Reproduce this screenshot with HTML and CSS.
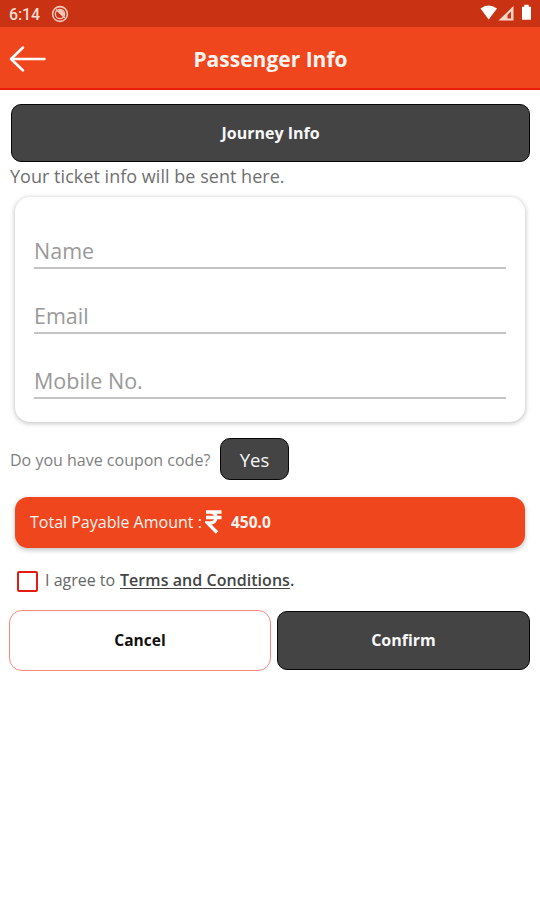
FILE: index.html
```
<!DOCTYPE html>
<html lang="en">
<head>
<meta charset="utf-8">
<title>Passenger Info</title>
<link rel="stylesheet" href="styles.css">
</head>
<body>
<div class="status">
  <span class="clock">6:14</span>
  <svg class="notice" width="18" height="18" viewBox="0 0 18 18"><circle cx="9" cy="9" r="7.4" fill="none" stroke="#f6c9bd" stroke-width="1.6"/><circle cx="9" cy="9" r="4.6" fill="none" stroke="#f6c9bd" stroke-width="1.3"/><path d="M5 4.500 14 13M7 6.200c3-1.700 5.600 0 5.500 3.500z" fill="#f6c9bd" stroke="#f6c9bd" stroke-width="1.300"/></svg>
  <svg class="signals" width="52" height="18" viewBox="0 0 52 18"><path d="M.5 4.500Q8.500-1.500 17 4.500L8.700 15.500z" fill="#fff"/><path d="M33.500 2V16.500H18.500z" fill="#f9d5ca"/><path d="M27.500 11 31 7.500V14.500H27.500z" fill="#c93212"/><path d="M42 2.800h2.300V.8h4.400v2H51V15.800h-9z" fill="#fff"/></svg>
</div>
<header class="bar">
  <svg class="back" width="38" height="28" viewBox="0 0 38 28"><path d="M14 2.500 2 14 14 25.500M2 14H35.500" fill="none" stroke="#fff" stroke-width="2.500" stroke-linecap="round" stroke-linejoin="round"/></svg>
  <h1>Passenger Info</h1>
</header>
<main>
  <button class="dark journey">Journey Info</button>
  <p class="hint">Your ticket info will be sent here.</p>
  <section class="card">
    <div class="field">Name</div>
    <div class="field">Email</div>
    <div class="field">Mobile No.</div>
  </section>
  <div class="coupon"><span class="question">Do you have coupon code?</span><button class="dark yes">Yes</button></div>
  <div class="total"><span class="label">Total Payable Amount :</span><svg width="17" height="24" viewBox="0 0 17 24"><path d="M1 2H16.500M1 7.500H16.500M1 2H5C13 2 13 13 5 13H2.500L12 22.500" fill="none" stroke="#fff" stroke-width="3.300"/></svg><b>450.0</b></div>
  <div class="agree"><i class="box"></i><span class="lead">I agree to</span><b><u>Terms and Conditions</u>.</b></div>
  <div class="actions"><button class="cancel">Cancel</button><button class="dark confirm">Confirm</button></div>
</main>
</body>
</html>
```
FILE: styles.css
```
* { box-sizing: border-box; }
body { margin: 0; background: #fff; font-family: "Open Sans", sans-serif; color: #666; white-space: nowrap; }
button { font: inherit; padding: 0; margin: 0; white-space: nowrap; }
svg { display: block; flex: none; }
.status { height: 27px; background: #c93212; display: flex; align-items: center; padding: 0 8px 0 9px; }
.clock { font: 500 16px/27px Roboto, sans-serif; letter-spacing: -.15px; color: #fbdcd3; width: 42px; padding-top: 1px; }
.signals { margin-left: auto; margin-top: -1px; }
.bar { height: 63px; background: #ef461e; border-bottom: 2px solid #ea1c0a; display: grid; grid-template-columns: 46px 1fr 46px; align-items: center; padding: 0 0 0 9px; }
.back { margin-top: 2px; }
h1 { margin: 3px 0 0; font-size: 21px; line-height: 28px; font-weight: 700; color: #fff4ef; text-align: center; padding-right: 8px; }
main { padding: 14px 10px 0; }
.dark { background: #444; border: 1px solid #080808; border-radius: 10px; color: #f7f7f7; }
.journey { display: block; width: 519px; height: 58px; margin-left: 1px; font-size: 16px; font-weight: 700; }
.hint { margin: 0; height: 35px; font-size: 18px; letter-spacing: .03px; line-height: 28px; color: #707070; }
.card { height: 225px; margin: 0 5px; border-radius: 15px; padding: 7px 19px 0; box-shadow: 0 1px 4px 1px rgba(0,0,0,.2); background: #fff; }
.field { height: 65px; border-bottom: 2px solid #c4c4c4; display: flex; align-items: flex-end; font-size: 21.5px; line-height: 33px; color: #999; }
.coupon { display: flex; align-items: center; height: 42px; margin-top: 16px; }
.question { width: 210px; font-size: 16px; color: #808080; padding-top: 2px; }
.yes { width: 69px; height: 42px; font-size: 18.5px; }
.total { display: flex; align-items: center; height: 51px; margin: 17px 5px 0; padding: 0 0 1px 15px; border-radius: 13px; background: #ef461e; box-shadow: 0 2px 5px rgba(0,0,0,.25); color: #fff4ef; font-size: 16px; }
.total .label { width: 175px; }
.total b { margin-left: 9px; font-size: 15.5px; }
.agree { display: flex; align-items: center; height: 24px; margin-top: 21px; padding-left: 7px; font-size: 16px; line-height: 22px; color: #666; }
.agree span, .agree b { margin-top: -2px; }
.box { width: 21px; height: 21px; border: 2px solid #e51c12; border-radius: 2px; }
.lead { margin-left: 7px; width: 75px; }
.agree b { color: #444; font-weight: 600; letter-spacing: .05px; }
.agree u { text-underline-offset: 2px; text-decoration-thickness: 1px; }
.actions { display: flex; align-items: center; gap: 6px; height: 61px; margin: 17px 0 0 -1px; font-size: 16px; font-weight: 700; }
.actions button { padding-bottom: 2px; }
.cancel { width: 262px; height: 61px; border: 1px solid #f38a7c; border-radius: 13px; background: #fff; color: #111; font-size: 15.5px; }
.confirm { width: 253px; height: 59px; }
```
